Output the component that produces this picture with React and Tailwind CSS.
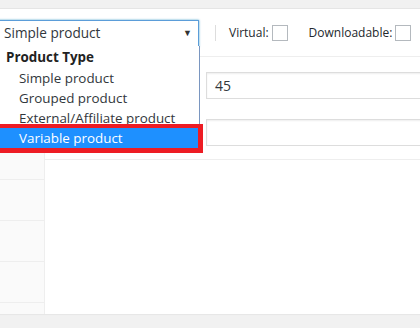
import { useState } from 'react';

const options = ['Simple product', 'Grouped product', 'External/Affiliate product', 'Variable product'];

export default function App() {
  const [selected] = useState('Simple product');
  const active = 'Variable product';

  return (
    <div className="w-[420px] h-[328px] bg-[#f1f1f1] overflow-hidden relative" style={{ fontFamily: '"Open Sans", "Noto Sans", sans-serif' }}>
      <div className="h-[8px]" />
      {/* Panel */}
      <div className="bg-white border-t border-[#e5e5e5] h-[306px] flex flex-col shadow-[0_1px_1px_rgba(0,0,0,0.04)]">
        {/* Header */}
        <div className="h-[48px] border-b border-[#eee] flex items-center shrink-0 relative">
          <div className="relative ml-[-2px] mt-[1px]">
            <div className="w-[201px] h-[27px] border border-[#5b9dd9] shadow-[0_0_2px_rgba(30,140,190,0.8)] bg-white flex items-center justify-between pl-[5px] pr-[6px] text-[13.6px] text-[#32373c]">
              <span className="mt-[1px]">{selected}</span>
              <span className="text-[9px] text-[#333]">▼</span>
            </div>
          </div>
          <div className="w-px h-[16px] bg-[#ddd] ml-[16px]" />
          <label className="flex items-center ml-[13px] text-[12px] text-[#23282d]">
            Virtual:
            <span className="w-[16px] h-[16px] border border-[#b4b9be] ml-[3px] bg-white" />
          </label>
          <label className="flex items-center ml-[21px] text-[12px] text-[#23282d]">
            Downloadable:
            <span className="w-[16px] h-[16px] border border-[#b4b9be] ml-[3px] bg-white" />
          </label>
        </div>
        {/* Body */}
        <div className="flex flex-1 min-h-0">
          <div className="w-[45px] bg-[#fafafa] border-r border-[#eee] shrink-0 flex flex-col">
            {[0, 1, 2, 3, 4, 5].map((i) => (
              <div key={i} className="h-[41px] border-b border-[#eee] shrink-0" />
            ))}
          </div>
          <div className="flex-1 flex flex-col">
            <div className="border-b border-[#eee] h-[103px] pt-[15px] pl-[161px] flex flex-col gap-[20px]">
              <div className="h-[27px] border border-[#ddd] shadow-[inset_0_1px_2px_rgba(0,0,0,0.07)] flex items-center pl-[8px] text-[14px] text-[#32373c] w-[260px]">
                45
              </div>
              <div className="h-[27px] border border-[#ddd] shadow-[inset_0_1px_2px_rgba(0,0,0,0.07)] w-[260px]" />
            </div>
          </div>
        </div>
      </div>

      {/* Dropdown list */}
      <div className="absolute left-[-1px] top-[46px] w-[201px] bg-white border border-t-0 border-[#7a96c0] text-[13.4px] text-[#32373c]">
        <div className="h-[22px] pl-[6px] flex items-center font-bold text-[13.4px] text-[#222]">Product Type</div>
        <div>
          {options.map((o) => (
            <div
              key={o}
              className={`h-[20px] pl-[19px] flex items-center ${o === active ? 'bg-[#1e90ff] text-white' : ''}`}
            >
              {o}
            </div>
          ))}
        </div>
      </div>
      {/* Highlight frame */}
      <div className="absolute left-[-5px] top-[124px] w-[208px] h-[29px] border-[5px] border-t-[4px] border-[#ed1c24]" />
    </div>
  );
}
